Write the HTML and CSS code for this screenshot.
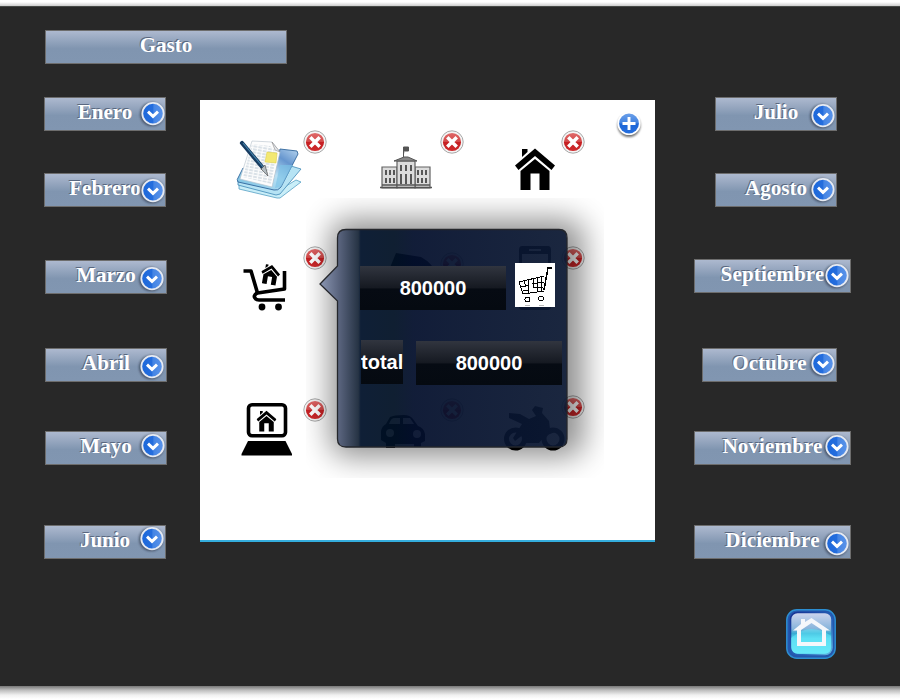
FILE: index.html
```html
<!DOCTYPE html>
<html lang="es">
<head>
<meta charset="utf-8">
<title>Gasto</title>
<link rel="stylesheet" href="styles.css">
</head>
<body>
<svg class="defs" width="0" height="0">
  <defs>
    <linearGradient id="blue" x1="0" y1="0" x2="1" y2="0"><stop offset="0" stop-color="#1d68da"/><stop offset=".48" stop-color="#246ddd"/><stop offset=".55" stop-color="#4585e4"/><stop offset="1" stop-color="#5b94ea"/></linearGradient>
    <linearGradient id="plusblue" x1="0" y1="0" x2="0" y2="1"><stop offset="0" stop-color="#6a9fe9"/><stop offset=".48" stop-color="#4182e0"/><stop offset=".52" stop-color="#1c65d6"/><stop offset="1" stop-color="#266fdf"/></linearGradient>
    <linearGradient id="red" x1="0" y1="0" x2="0" y2="1"><stop offset="0" stop-color="#e06a6a"/><stop offset=".48" stop-color="#d24848"/><stop offset=".52" stop-color="#c51f22"/><stop offset="1" stop-color="#cf2b2d"/></linearGradient>
    <filter id="soft" x="-30%" y="-30%" width="160%" height="160%"><feGaussianBlur stdDeviation="1.3"/></filter>
    <symbol id="arrow" viewBox="0 0 30 30">
      <circle cx="14" cy="15.2" r="12" fill="#202a3a" opacity=".6" filter="url(#soft)"/>
      <circle cx="15" cy="14.600" r="10.7" fill="url(#blue)" stroke="#e6eaf2" stroke-width="1.8"/>
      <path d="M10 12.600 L15 17.400 L20 12.600" fill="none" stroke="#fff" stroke-width="2.900"/>
    </symbol>
    <symbol id="del" viewBox="0 0 26 26">
      <circle cx="13" cy="13" r="11.2" fill="#f4f4f4" stroke="#a9a9a9" stroke-width="1"/>
      <circle cx="13" cy="13" r="9.1" fill="url(#red)"/>
      <path d="M8.300 8.300 L17.700 17.700 M17.700 8.300 L8.300 17.700" stroke="#fff" stroke-width="3.5"/>
    </symbol>
    <symbol id="house" viewBox="0 0 40 42">
      <path d="M7 1h5.500v3l-5.500 5z"/>
      <path d="M20 .5 40 17.500 36.500 22 20 8 3.500 22 0 17.500z"/>
      <path d="M20 11 34.500 23V42H24.500V25.500H15.500V42H5.500V23z"/>
    </symbol>
  </defs>
</svg>
<div class="frame">
  <header class="title bar"><span>Gasto</span></header>
  <main class="board">
    <nav class="months first">
      <button class="bar"><span>Enero</span><svg class="arrow"><use href="#arrow"/></svg></button>
      <button class="bar"><span>Febrero</span><svg class="arrow"><use href="#arrow"/></svg></button>
      <button class="bar"><span>Marzo</span><svg class="arrow"><use href="#arrow"/></svg></button>
      <button class="bar"><span>Abril</span><svg class="arrow"><use href="#arrow"/></svg></button>
      <button class="bar"><span>Mayo</span><svg class="arrow"><use href="#arrow"/></svg></button>
      <button class="bar"><span>Junio</span><svg class="arrow"><use href="#arrow"/></svg></button>
    </nav>
    <section class="panel">
      <svg class="add" viewBox="0 0 30 30">
        <circle cx="15" cy="16.500" r="11.500" fill="#000" opacity=".55" filter="url(#soft)"/>
        <circle cx="15" cy="14.500" r="11.600" fill="#fff"/>
        <circle cx="15" cy="14.500" r="9.900" fill="url(#plusblue)"/>
        <path d="M15 8v13M8.500 14.500h13" stroke="#fff" stroke-width="2.900"/>
      </svg>
      <div class="items">
        <div class="item">
          <svg class="pic" viewBox="230 130 80 80">
            <defs>
              <linearGradient id="folder" x1="0" y1="1" x2="1" y2="0"><stop offset="0" stop-color="#72bde0"/><stop offset=".5" stop-color="#b9e0f4"/><stop offset=".75" stop-color="#6696cf"/><stop offset="1" stop-color="#b6d4ee"/></linearGradient>
              <pattern id="lines" width="5" height="3" patternUnits="userSpaceOnUse" patternTransform="rotate(10)"><path d="M0 1h3.800" stroke="#a5b7c6" stroke-width=".8"/></pattern>
            </defs>
            <path d="M239 189 277 198 280 198 301 182 296 180 276 192 239 184z" fill="#c9eef8" stroke="#559fc4" stroke-width=".8"/>
            <path d="M238 185 276 195 280 194 301 169 291 166 274 189 238 181z" fill="#b6e3f4" stroke="#4089b6" stroke-width=".8"/>
            <path d="M280 149 297 151 298 154 281 187Q278 191 274 190L238 182Q236 180 239 176L243 168 272 184z" fill="url(#folder)" stroke="#31679c" stroke-width=".9"/>
            <path d="M280 165 293 165 281 187 275 188z" fill="#7dc3e7" opacity=".65"/>
            <path d="M252 141 272 142 280 152 272 187 240 179z" fill="#fdfdfd" stroke="#b4c0ca" stroke-width=".6"/>
            <path d="M252 144 270 146 278 153 271 184 243 177z" fill="url(#lines)"/>
            <path d="M272 142 280 152 275 150z" fill="#e6e8ec" stroke="#888" stroke-width=".6"/>
            <path d="M267 152 277 153 276 163 265 162z" fill="#f3e872" stroke="#d8c83d" stroke-width=".5"/>
            <path d="M242 143 263 168" stroke="#173b60" stroke-width="4.200" stroke-linecap="round"/>
            <path d="M243 143 263 167" stroke="#4584ab" stroke-width="1.100"/>
            <path d="M261 169 265 165 268 176z" fill="#b4bdc2" stroke="#444" stroke-width=".6"/>
          </svg>
          <svg class="del"><use href="#del"/></svg>
        </div>
        <div class="item">
          <svg class="pic" viewBox="370 130 80 80">
            <g fill="#dcdcdc" stroke="#626262" stroke-width="1.200">
              <path d="M382 167h15v21h-15zM415 167h15v21h-15z"/><path d="M397 161h18v27h-18z"/>
            </g>
            <path d="M394 161 404 157 408 157 417 161z" fill="#888" stroke="#555"/>
            <path d="M403.500 157V147h5v4h-4" stroke="#555" fill="#555" stroke-width="1"/>
            <path d="M380 187.500h52M382 185h48" stroke="#555" stroke-width="1.500"/>
            <path d="M386 170v5M390 170v5M394 170v5M418 170v5M422 170v5M426 170v5M386 178v5M390 178v5M394 178v5M418 178v5M422 178v5M426 178v5M401 165v6M406 165v6M411 165v6M401 174v10M406 174v10M411 174v10" stroke="#505050" stroke-width="1.900"/>
          </svg>
          <svg class="del"><use href="#del"/></svg>
        </div>
        <div class="item">
          <svg class="pic" viewBox="510 130 80 80"><use href="#house" x="515" y="148" width="40" height="42"/></svg>
          <svg class="del"><use href="#del"/></svg>
        </div>
        <div class="item">
          <svg class="pic" viewBox="230 246 80 80">
            <g fill="none" stroke="#000" stroke-width="3.600" stroke-linejoin="round">
              <path d="M243.500 271h7.500l6.500 22L284.500 289V271"/><path d="M257 293q-4 3-2 5 1 2 4 2h26" />
            </g>
            <circle cx="262" cy="307" r="3.400"/><circle cx="278.500" cy="307" r="3.400"/>
            <use href="#house" x="261" y="264" width="19" height="21" transform="rotate(10 270 274)"/>
          </svg>
          <svg class="del"><use href="#del"/></svg>
        </div>
        <div class="item">
          <svg class="pic" viewBox="370 246 80 80"><path d="M396 253 421 257Q434 264 436 275L430 286 400 293 386 302 383 298 397 275 389 270z"/></svg>
          <svg class="del"><use href="#del"/></svg>
        </div>
        <div class="item">
          <svg class="pic" viewBox="510 246 80 80"><path fill-rule="evenodd" d="M522 246h26q3 0 3 4v56q0 4-3 4h-26q-3 0-3-4v-56q0-4 3-4zm0 8v44h26v-44zM529 249h12v2h-12z"/></svg>
          <svg class="del"><use href="#del"/></svg>
        </div>
        <div class="item">
          <svg class="pic" viewBox="230 396 80 80">
            <rect x="248.500" y="404.800" width="37" height="31" rx="3.500" fill="#fff" stroke="#000" stroke-width="3.600"/>
            <use href="#house" x="256.500" y="410" width="20" height="22"/>
            <path d="M248 441H285.500L292 454V455.500H241.500V454z"/>
          </svg>
          <svg class="del"><use href="#del"/></svg>
        </div>
        <div class="item">
          <svg class="pic" viewBox="370 396 80 80">
            <path fill-rule="evenodd" d="M386 424 390 417Q394 415 404 415 410 415 413 419L418 426Q424 428 425 434V441L421 443V447H414V444H395V448H386V443L381 440V431Q382 426 386 424zm3 0h11v-6h-6q-3 0-5 6zm14 0h11l-4-6h-7zM386 433a4 4 0 1 0 8 0 4 4 0 1 0-8 0M413 434a4 4 0 1 0 8 0 4 4 0 1 0-8 0"/>
          </svg>
          <svg class="del"><use href="#del"/></svg>
        </div>
        <div class="item">
          <svg class="pic" viewBox="500 396 80 80">
            <g fill="none" stroke="#000" stroke-width="5"><circle cx="515.500" cy="439" r="9"/><circle cx="553" cy="439" r="9"/></g>
            <path d="M509 413 520 414 529 419 536 416 532 410 535 406 543 408 542 413 549 421 550 429 555 432 545 436 539 443H526L524 434 515 441 513 438 522 424 509 418z"/>
          </svg>
          <svg class="del"><use href="#del"/></svg>
        </div>
      </div>
      <div class="popup">
        <svg class="bubble" viewBox="306 198 298 280">
          <defs>
            <linearGradient id="navy" gradientUnits="userSpaceOnUse" x1="320" y1="0" x2="567" y2="0"><stop offset="0" stop-color="#8490ae"/><stop offset=".08" stop-color="#4d5873"/><stop offset=".155" stop-color="#192739"/><stop offset=".165" stop-color="#00112a"/><stop offset=".3" stop-color="#011125"/><stop offset=".38" stop-color="#030f2c"/><stop offset="1" stop-color="#0c1933"/></linearGradient>
            <filter id="shade" x="-30%" y="-30%" width="160%" height="160%"><feGaussianBlur stdDeviation="15"/></filter>
            <mask id="outside"><path d="M306 198h298v280H306z" fill="#fff"/><path d="M346 229.500H559Q567 229.500 567 238V439Q567 447 559 447H346Q337.500 447 337.500 439V301L320 284 337.500 266V238Q337.500 229.500 346 229.500z" fill="#000"/></mask>
          </defs>
          <g mask="url(#outside)"><rect x="330" y="219" width="254" height="238" rx="18" fill="#000" opacity=".44" filter="url(#shade)"/></g>
          <path d="M346 229.500H559Q567 229.500 567 238V439Q567 447 559 447H346Q337.500 447 337.500 439V301L320 284 337.500 266V238Q337.500 229.500 346 229.500z" fill="url(#navy)" fill-opacity=".94" stroke="#25272c" stroke-width="1.300"/>
        </svg>
        <div class="rows">
          <div class="row">
            <output class="field">800000</output>
            <svg class="cart" viewBox="0 0 40 44" shape-rendering="crispEdges">
              <path d="M0 0h40v44H0z" fill="#fff"/>
              <g fill="none" stroke="#000" stroke-width="1"><path d="M37 5h-4l-4 22" stroke-width="1.500"/><path d="M29 28L8 31 4 19l25-6M6 24l8-2M17 21l12-2M8 28l6-1M18 25l10-1M9 18l2 6M13 17l1 13M18 16v8M22 15v14M27 14l-1 14"/><circle cx="12.500" cy="36.500" r="2.500"/><circle cx="26" cy="35.500" r="2.500"/></g>
              <path d="M10 42.500h5M24 42.500h5" stroke="#bbb"/>
            </svg>
          </div>
          <div class="row second">
            <span class="field label">total</span>
            <output class="field sum">800000</output>
          </div>
        </div>
      </div>
    </section>
    <nav class="months last">
      <button class="bar"><span>Julio</span><svg class="arrow"><use href="#arrow"/></svg></button>
      <button class="bar"><span>Agosto</span><svg class="arrow"><use href="#arrow"/></svg></button>
      <button class="bar wide"><span>Septiembre</span><svg class="arrow"><use href="#arrow"/></svg></button>
      <button class="bar mid"><span>Octubre</span><svg class="arrow"><use href="#arrow"/></svg></button>
      <button class="bar wide"><span>Noviembre</span><svg class="arrow"><use href="#arrow"/></svg></button>
      <button class="bar wide"><span>Diciembre</span><svg class="arrow"><use href="#arrow"/></svg></button>
    </nav>
  </main>
  <footer class="foot">
    <svg class="home" viewBox="0 0 50 50">
      <defs>
        <linearGradient id="glass" x1="0" y1="0" x2="0" y2="1"><stop offset="0" stop-color="#cfd5ee"/><stop offset=".38" stop-color="#89b5dc"/><stop offset=".5" stop-color="#38acd4"/><stop offset=".62" stop-color="#55d8f0"/><stop offset="1" stop-color="#6cecfc"/></linearGradient>
        <linearGradient id="rim" x1="0" y1="0" x2="1" y2="1"><stop offset="0" stop-color="#142f91"/><stop offset=".65" stop-color="#2867bd"/><stop offset="1" stop-color="#65bce4"/></linearGradient>
      </defs>
      <rect x=".8" y=".8" width="48.400" height="48.400" rx="10" fill="#2457ad" stroke="#2c8ed1" stroke-width="1.500"/>
      <rect x="4.500" y="3.500" width="41.500" height="42" rx="7" fill="url(#glass)" stroke="url(#rim)" stroke-width="1.600"/>
      <path d="M5 29Q16 20 25 20 36 20 45 27V37Q45 44 38 45H13Q5 44 5 37z" fill="#64e7f8" opacity=".5"/>
      <path fill="#f5f7fb" fill-rule="evenodd" d="M7 21.500 15 15V10h4v3L25.500 9 44 21.500H40V37H11V21.500zM15 21V33H36V21L25.500 14z"/>
    </svg>
  </footer>
</div>
</body>
</html>
```
FILE: styles.css
```css
* { box-sizing: border-box; }
body { margin: 0; width: 900px; height: 700px; overflow: hidden; background: linear-gradient(#fff 0, #fff 2px, #ccc 6px, #ccc 686px, #777 686px, #bbb 690px, #f0f0f0 695px, #fff 699px); }
.defs { position: absolute; }
svg { display: block; }
.frame { height: 680px; margin-top: 6px; background: #282828; border-top: 1px solid #464946; padding: 23px 49px 0 44px; }
.bar { position: relative; display: block; width: 122px; height: 34px; margin: 0; padding: 0; border: 1px solid #6d6d6d; background: linear-gradient(#adb9cf, #8095b0 55%, #8196b1); color: #fff; text-align: center; font: bold 21px/30px "Liberation Serif", serif; text-shadow: -1px -1px 0 #5a6880; }
.bar span { display: block; height: 32px; line-height: 29px; }
.title { width: 242px; margin-left: 1px; }
.board { display: flex; margin-top: 33px; height: 445px; }
.months { display: flex; flex-direction: column; width: 156px; }
.months .bar { flex: none; }
.months .bar:nth-child(2) { margin-top: 42px; }
.months .bar:nth-child(3) { margin-top: 53px; }
.months .bar:nth-child(4) { margin-top: 54px; }
.months .bar:nth-child(5) { margin-top: 49px; }
.months .bar:nth-child(6) { margin-top: 60px; }
.first .bar:nth-child(n+3):nth-child(-n+5) { margin-left: 1px; }
.last { width: 157px; margin-left: 39px; align-items: flex-end; padding-right: 14px; }
.last .bar:nth-child(3) { margin-top: 52px; }
.last .bar:nth-child(4) { margin-top: 55px; }
.last .wide { width: 157px; margin-right: -14px; }
.last .wide span { letter-spacing: .15px; }
.last .mid { width: 135px; }
.arrow { position: absolute; width: 30px; height: 30px; right: -3px; top: 1px; }
.first .bar:nth-child(2) .arrow { top: 2px; }
.first .bar:nth-child(3) .arrow { top: 3px; right: -1px; }
.first .bar:nth-child(4) .arrow { top: 3px; right: -1px; }
.first .bar:nth-child(5) .arrow { top: -1px; right: -2px; }
.first .bar:nth-child(6) .arrow { top: -2px; right: -2px; }
.last .arrow { right: -2px; }
.last .bar:nth-child(1) .arrow { top: 3px; }
.last .bar:nth-child(4) .arrow { top: 0; }
.last .bar:nth-child(5) .arrow { top: 0; }
.last .bar:nth-child(6) .arrow { top: 3px; }
.panel { position: relative; flex: none; width: 455px; height: 442px; margin-top: 3px; background: #fff; border-bottom: 2px solid #34addd; }
.add { position: absolute; width: 30px; height: 30px; left: 414px; top: 9px; }
.items { display: grid; grid-template-columns: 140px 140px 100px; grid-template-rows: 116px 150px 90px; padding: 30px 0 0 30px; }
.item { position: relative; }
.item:last-child { margin-left: -10px; }
.pic { width: 80px; height: 80px; }
.del { position: absolute; width: 26px; height: 26px; left: 72px; top: -1px; }
.item:nth-child(3n+2) .del { left: 69px; }
.item:nth-child(3n) .del { left: 50px; }
.item:nth-child(5) .del { top: 5px; }
.item:nth-child(7) .del, .item:nth-child(8) .del { top: 1px; }
.item:last-child .del { left: 60px; top: -2px; }
.popup { position: absolute; left: 106px; top: 98px; width: 298px; height: 280px; }
.bubble { position: absolute; inset: 0; width: 298px; height: 280px; }
.rows { position: relative; padding: 65px 0 0 54px; }
.row { display: flex; gap: 9px; }
.row .field { margin-top: 3px; }
.field { display: block; width: 146px; height: 44px; background: linear-gradient(#31353f, #151921 50%, #060b13 52%, #050a11); color: #fff; text-align: center; font: bold 20px/44px "Liberation Sans", sans-serif; }
.cart { width: 40px; height: 44px; }
.second { gap: 13px; margin-top: 30px; padding-left: 1px; }
.second .label { width: 42px; margin-top: 0; }
.second .sum { margin-top: 1px; }
.foot { display: flex; justify-content: flex-end; padding: 67px 15px 0 0; }
.home { width: 50px; height: 50px; }
```
